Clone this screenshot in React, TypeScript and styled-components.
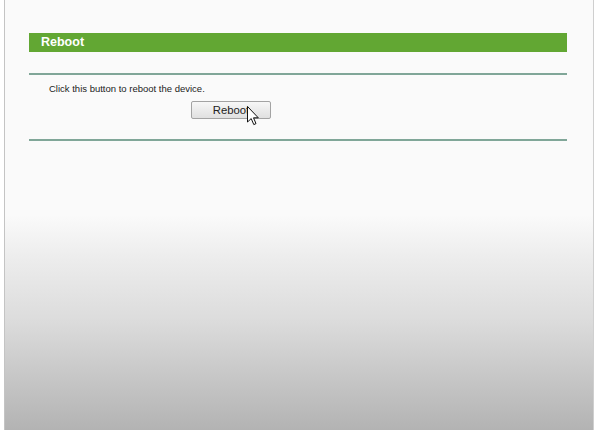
import React from "react";
import styled, { createGlobalStyle } from "styled-components";

const Global = createGlobalStyle`
  html, body { margin: 0; padding: 0; background: #ffffff; }
  body { font-family: "Liberation Sans", Arial, sans-serif; }
`;

const Frame = styled.div`
  box-sizing: border-box;
  margin-left: 4px;
  width: 590px;
  height: 430px;
  border-left: 1px solid #c4c4c4;
  border-right: 1px solid #cfcfcf;
  background: linear-gradient(
    to bottom,
    #fafafa 0px,
    #fafafa 215px,
    #ececec 260px,
    #dcdcdc 320px,
    #b3b3b3 100%
  );
  padding: 33px 0 0 24px;
  display: flex;
  flex-direction: column;
`;

const TitleBar = styled.div`
  width: 538px;
  height: 19px;
  background: #62a733;
  color: #ffffff;
  font-weight: bold;
  font-size: 12.5px;
  line-height: 19px;
  padding-left: 12px;
  box-sizing: border-box;
`;

const Rule = styled.div<{ $top: number }>`
  width: 538px;
  height: 2px;
  margin-top: ${(p) => p.$top}px;
  background: #80a698;
`;

const Body = styled.div`
  display: flex;
  flex-direction: column;
  align-items: flex-start;
`;

const Hint = styled.div`
  margin: 8px 0 0 20px;
  font-size: 9.5px;
  line-height: 11px;
  color: #222;
`;

const ButtonWrap = styled.div`
  position: relative;
  margin: 6px 0 0 162px;
`;

const Button = styled.button`
  width: 80px;
  height: 18px;
  padding: 0;
  border: 1px solid #a3a3a3;
  border-radius: 2px;
  background: linear-gradient(to bottom, #f7f7f7, #e0e0e0);
  font-family: "Liberation Sans", Arial, sans-serif;
  font-size: 11.3px;
  color: #222;
  cursor: pointer;
`;

const Cursor = styled.svg`
  position: absolute;
  left: 56px;
  top: 6px;
  pointer-events: none;
`;

export default function App() {
  return (
    <>
      <Global />
      <Frame>
        <TitleBar>Reboot</TitleBar>
        <Rule $top={21} />
        <Body>
          <Hint>Click this button to reboot the device.</Hint>
          <ButtonWrap>
            <Button>Reboot</Button>
            <Cursor width="13" height="20" viewBox="0 0 13 20">
              <path
                d="M0.5 0.5 L0.5 16 L4.2 12.6 L6.8 18.6 L9 17.6 L6.5 11.8 L11.3 11.8 Z"
                fill="#ffffff"
                stroke="#111"
                strokeWidth="1"
                strokeLinejoin="round"
              />
            </Cursor>
          </ButtonWrap>
          <Rule $top={20} />
        </Body>
      </Frame>
    </>
  );
}
